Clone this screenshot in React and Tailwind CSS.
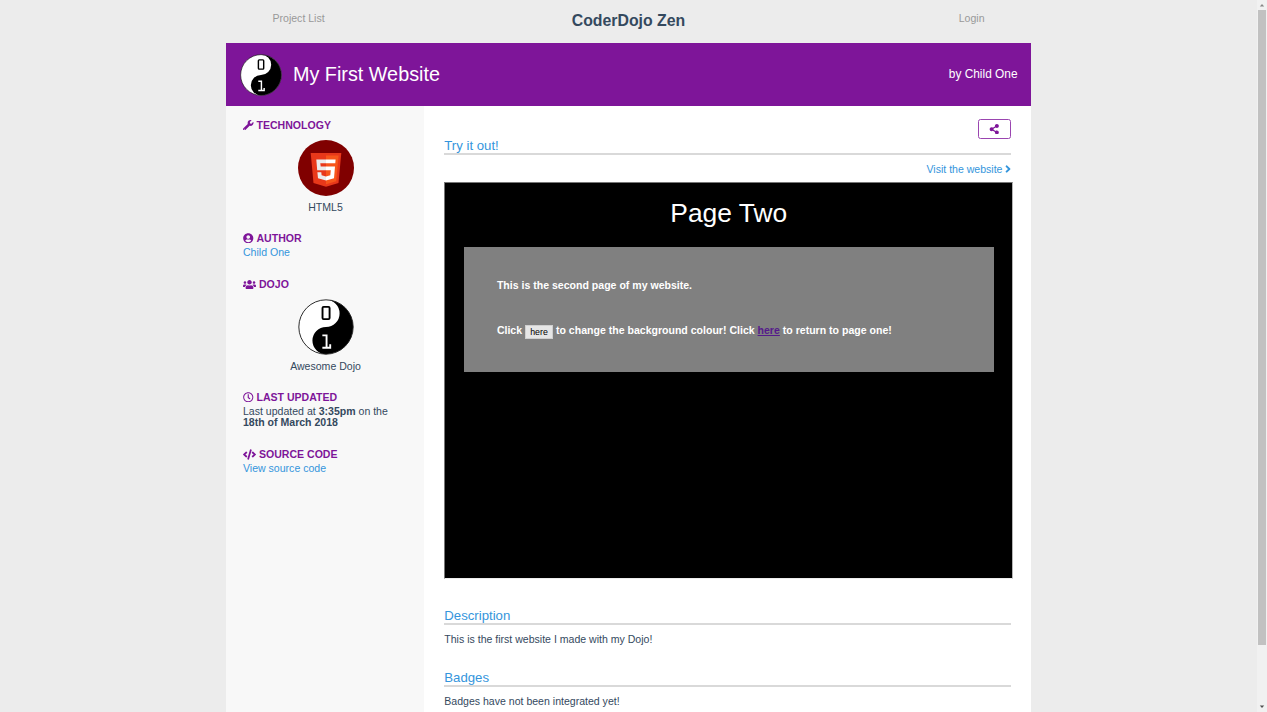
import { FaWrench, FaUserCircle, FaUsers, FaRegClock, FaCode, FaShareAlt, FaAngleRight } from "react-icons/fa";

function DojoLogo({ className }) {
  return (
    <svg viewBox="0 0 100 100" className={className} aria-hidden="true">
      <circle cx="50" cy="50" r="48.5" fill="#fff" />
      <path d="M50 1.5A48.5 48.5 0 0 1 50 98.5A24.25 24.25 0 0 1 50 50A24.25 24.25 0 0 0 50 1.5Z" fill="#000" />
      <circle cx="50" cy="50" r="48.5" fill="none" stroke="#222" strokeWidth="1.7" />
      <rect x="43.8" y="14" width="12.6" height="22" rx="2" fill="none" stroke="#000" strokeWidth="3.4" />
      <path d="M43.5 65H51V87M43.5 87H57.5V81" fill="none" stroke="#fff" strokeWidth="3.4" />
    </svg>
  );
}

function Html5Logo({ className }) {
  return (
    <svg viewBox="0 0 56 56" className={className} aria-hidden="true">
      <circle cx="28" cy="28" r="28" fill="#800000" />
      <path d="M12.7 13H43.3L40.5 43L28 46.8L15.5 43Z" fill="#e8381a" />
      <path d="M28 15.5H40.6L38.2 41.2L28 44.2Z" fill="#f7561b" />
      <path d="M28 19.5H18.3L19.2 30.2H28V26.4H22.7L22.3 23.3H28ZM28 36.6L23.6 35.3L23.3 32.2H19.4L20 38.3L28 40.6Z" fill="#ebebeb" />
      <path d="M28 19.5H37.6L37.3 23.3H28ZM28 26.4H37L36 38.3L28 40.6V36.6L32.3 35.3L32.8 30.2H28Z" fill="#fff" />
    </svg>
  );
}

function SideHeading({ icon: Icon, iconClass, children }) {
  return (
    <h2 className="flex h-[14px] items-center gap-[3px] font-bold uppercase text-[#7e1599]">
      <Icon className={iconClass} />
      <span>{children}</span>
    </h2>
  );
}

function SectionHeading({ children }) {
  return (
    <h2 className="h-[17px] border-b-2 border-[#d9d9d9] text-[13.2px] leading-[15px] text-[#3495dc]">{children}</h2>
  );
}

export default function App() {
  return (
    <div className="flex h-screen overflow-hidden bg-[#ececec] font-['Liberation_Sans',Arial,sans-serif] text-[10.56px] leading-[14px] text-[#34495e]">
      <div className="flex flex-1 flex-col items-center">
        <header className="grid h-[43px] w-[805px] shrink-0 grid-cols-3 text-[#999]">
          <a className="pl-[46.5px] pt-[11px]">Project List</a>
          <h1 className="pt-[12px] text-center text-[15.84px] font-bold leading-[18px] text-[#34495e]">CoderDojo Zen</h1>
          <a className="pr-[46.5px] pt-[11px] text-right">Login</a>
        </header>

        <div className="flex w-[805px] flex-1 flex-col bg-white">
          <div className="flex h-[63px] shrink-0 items-center bg-[#7e1599] pl-[14px] pr-[13.5px] text-white">
            <DojoLogo className="size-[42px]" />
            <span className="ml-[11px] flex-1 pb-[2px] text-[19.8px] leading-[24px]">My First Website</span>
            <span className="pb-[2px] text-[11.88px]">by Child One</span>
          </div>

          <div className="flex flex-1">
            <aside className="w-[198px] shrink-0 bg-[#f8f8f8] px-[17px] pt-[12px]">
              <section className="h-[113px]">
                <SideHeading icon={FaWrench} iconClass="size-[10.5px]">Technology</SideHeading>
                <div className="flex flex-col items-center gap-[4px] pl-[1px] pt-[8px]">
                  <Html5Logo className="size-[56px]" />
                  <span>HTML5</span>
                </div>
              </section>
              <section className="h-[46px]">
                <SideHeading icon={FaUserCircle} iconClass="size-[10.5px]">Author</SideHeading>
                <a className="text-[#3495dc]">Child One</a>
              </section>
              <section className="h-[113px]">
                <SideHeading icon={FaUsers} iconClass="size-[13px]">Dojo</SideHeading>
                <div className="flex flex-col items-center gap-[4px] pl-[1px] pt-[8px]">
                  <DojoLogo className="size-[56px]" />
                  <span>Awesome Dojo</span>
                </div>
              </section>
              <section className="h-[57px]">
                <SideHeading icon={FaRegClock} iconClass="size-[10.5px]">Last updated</SideHeading>
                <p className="pt-[2px] leading-[11px]">
                  Last updated at <b>3:35pm</b> on the
                  <br />
                  <b>18th of March 2018</b>
                </p>
              </section>
              <section>
                <SideHeading icon={FaCode} iconClass="size-[13px]">Source code</SideHeading>
                <a className="text-[#3495dc]">View source code</a>
              </section>
            </aside>

            <main className="min-w-0 flex-1 pl-[20.3px] pr-[20px] pt-[13px]">
              <div className="flex h-[25px] justify-end">
                <button className="flex h-[20px] w-[33px] items-center justify-center rounded-[2.5px] border border-[#9a45b0] text-[#7e1599]">
                  <FaShareAlt className="size-[10.5px]" />
                </button>
              </div>
              <div className="-mt-[6px]">
                <SectionHeading>Try it out!</SectionHeading>
              </div>
              <a className="mt-[7px] flex h-[14px] items-center justify-end gap-[2.5px] text-[#3495dc]">
                <span>Visit the website</span>
                <FaAngleRight className="h-[12px] w-[6px]" />
              </a>

              <div className="mt-[6px] h-[397px] w-[569px] border border-[#767676] border-b-[#ededed] border-r-[#b5b5b5] bg-black text-white">
                <div className="pt-[15px] text-center text-[26.4px] leading-[30px]">Page Two</div>
                <div className="ml-[18.6px] mt-[19px] h-[125px] w-[530px] bg-[#808080] pl-[33px] pt-[31px] font-bold">
                  <p>This is the second page of my website.</p>
                  <p className="mt-[31px] flex h-[16px] items-start whitespace-pre">
                    <span>Click </span>
                    <button className="mt-[2px] h-[14px] w-[28px] border border-[#cfcfcf] bg-[#e6e6e6] text-center text-[8.8px] font-normal leading-[12px] text-black">here</button>
                    <span> to change the background colour! Click </span>
                    <a className="text-[#551a8b] underline">here</a>
                    <span> to return to page one!</span>
                  </p>
                </div>
              </div>

              <div className="mt-[29px]">
                <SectionHeading>Description</SectionHeading>
              </div>
              <p className="mt-[7px]">This is the first website I made with my Dojo!</p>
              <div className="mt-[24px]">
                <SectionHeading>Badges</SectionHeading>
              </div>
              <p className="mt-[7px]">Badges have not been integrated yet!</p>
            </main>
          </div>
        </div>
      </div>

      <div className="flex w-[10px] flex-col items-center bg-[#f1f1f1]">
        <svg viewBox="0 0 10 10" className="size-[10px] shrink-0"><path d="M2.8 6.5L5 4L7.2 6.5Z" fill="#888" /></svg>
        <div className="h-[635px] w-[8px] bg-[#c1c1c1]" />
        <svg viewBox="0 0 10 10" className="mt-auto size-[10px] shrink-0"><path d="M2.8 3.5L5 6L7.2 3.5Z" fill="#505050" /></svg>
      </div>
    </div>
  );
}
